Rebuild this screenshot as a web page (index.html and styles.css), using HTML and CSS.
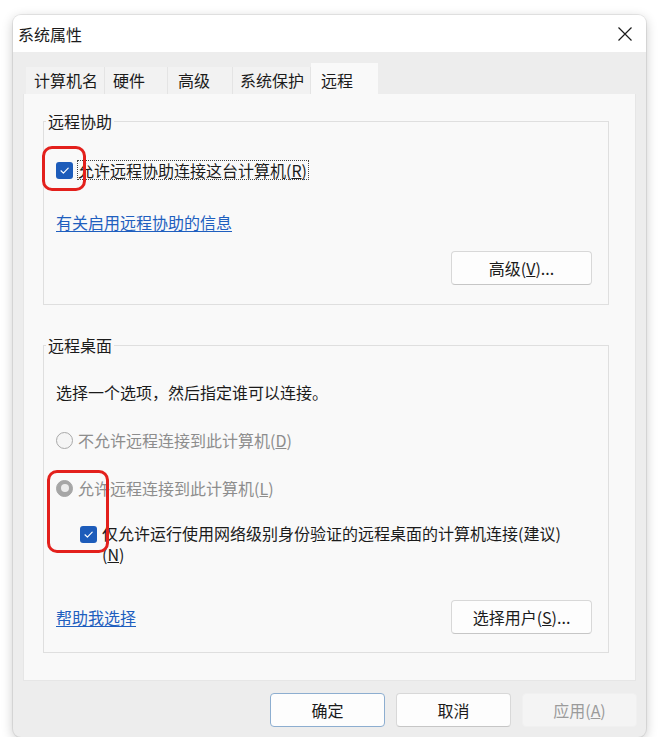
FILE: index.html
```html
<!DOCTYPE html>
<html lang="zh-CN">
<head>
<meta charset="utf-8">
<title>系统属性</title>
<link rel="stylesheet" href="styles.css">
</head>
<body>
<div class="window">
  <div class="titlebar">
    <span class="title">系统属性</span>
    <svg class="close" width="14" height="14" viewBox="0 0 14 14"><path d="M0.5 0.5 L13.5 13.5 M13.5 0.5 L0.5 13.5" stroke="#1b1b1b" stroke-width="1.2" fill="none"/></svg>
  </div>
  <div class="tabs">
    <div class="tab t1">计算机名</div>
    <div class="tab t2">硬件</div>
    <div class="tab t3">高级</div>
    <div class="tab t4">系统保护</div>
    <div class="tab t5 active">远程</div>
  </div>
  <div class="panel">
    <fieldset class="group g1">
      <legend>远程协助</legend>
      <div class="group-body">
        <div class="check-row">
          <span class="checkbox"><svg width="17" height="17" viewBox="0 0 17 17"><path d="M5 8.8 L7.4 11.1 L12.2 6.2" stroke="#fff" stroke-width="1.2" fill="none" stroke-linecap="round" stroke-linejoin="round"/></svg></span>
          <span class="focus">允许远程协助连接这台计算机(<u>R</u>)</span>
        </div>
        <div class="link-row"><a class="link" href="#">有关启用远程协助的信息</a></div>
        <div class="btn-row"><button class="btn">高级(<u>V</u>)...</button></div>
      </div>
    </fieldset>
    <fieldset class="group g2">
      <legend>远程桌面</legend>
      <div class="group-body">
        <div class="desc">选择一个选项，然后指定谁可以连接。</div>
        <div class="radio-row r1"><span class="radio"></span><span class="disabled">不允许远程连接到此计算机(<u>D</u>)</span></div>
        <div class="radio-row r2"><span class="radio on"></span><span class="disabled">允许远程连接到此计算机(<u>L</u>)</span></div>
        <div class="nla-row">
          <span class="checkbox"><svg width="17" height="17" viewBox="0 0 17 17"><path d="M5 8.8 L7.4 11.1 L12.2 6.2" stroke="#fff" stroke-width="1.2" fill="none" stroke-linecap="round" stroke-linejoin="round"/></svg></span>
          <span class="nla-text">仅允许运行使用网络级别身份验证的远程桌面的计算机连接(建议)<br>(<u>N</u>)</span>
        </div>
        <div class="bottom-row">
          <a class="link" href="#">帮助我选择</a>
          <button class="btn">选择用户(<u>S</u>)...</button>
        </div>
      </div>
    </fieldset>
  </div>
  <div class="footer">
    <button class="fbtn ok">确定</button>
    <button class="fbtn">取消</button>
    <button class="fbtn off">应用(<u>A</u>)</button>
  </div>
  <div class="mark mark1"></div>
  <div class="mark mark2"></div>
</div>
</body>
</html>
```
FILE: styles.css
```css
html, body {
  margin: 0;
  background: #ffffff;
}
body {
  font-family: "Noto Sans CJK SC", "Noto Sans", sans-serif;
  font-size: 16px;
  color: #1b1b1b;
}
.window {
  position: relative;
  margin: 15px 0 0 13px;
  width: 633px;
  height: 722px;
  border-radius: 8px;
  overflow: hidden;
  background: #ededed;
  box-shadow: 0 0 0 1px rgba(0,0,0,0.07), 0 3px 12px rgba(0,0,0,0.22);
  display: flex;
  flex-direction: column;
}
.titlebar {
  height: 37px;
  flex-shrink: 0;
  background: #ffffff;
  display: flex;
  align-items: center;
  justify-content: space-between;
  padding: 0 14px 0 5px;
}
.title {
  line-height: 22px;
}
.close {
  display: block;
}
.tabs {
  display: flex;
  align-items: flex-end;
  height: 31px;
  margin: 11px 0 0 13px;
  flex-shrink: 0;
}
.tab {
  height: 27px;
  box-sizing: border-box;
  line-height: 27px;
  padding-left: 8px;
  background: #f2f2f2;
  border-right: 1px solid #e4e4e4;
  white-space: nowrap;
}
.t1 { width: 79px; }
.t2 { width: 63px; }
.t3 { width: 65px; padding-left: 10px; }
.t4 { width: 78px; padding-left: 7px; }
.t5 { width: 67px; padding-left: 10px; }
.tab.active {
  height: 31px;
  padding-top: 4px;
  background: #f9f9f9;
  border-right: none;
}
.panel {
  margin: 0 10px;
  height: 587px;
  flex-shrink: 0;
  box-sizing: border-box;
  background: #f9f9f9;
  border: 1px solid #e6e6e6;
  border-top: none;
  padding: 0 26px 0 19px;
}
.group {
  margin: 0;
  padding: 0;
  min-width: 0;
  border: 1px solid #dfdfdf;
}
.group legend {
  padding: 0 2px;
  margin-left: 2px;
  line-height: 22px;
}
.g1 { margin-top: 16px; }
.g2 { margin-top: 29px; }
.group-body {
  padding: 0 16px 19px 12px;
}
.g2 .group-body { padding-bottom: 18px; }
.check-row {
  margin-top: 27px;
  height: 22px;
  display: flex;
  align-items: center;
}
.checkbox {
  width: 17px;
  height: 17px;
  flex-shrink: 0;
  border-radius: 3px;
  background: #1d5cba;
  display: block;
}
.checkbox svg { display: block; }
.focus {
  margin-left: 4px;
  border: 1px dotted #444;
  line-height: 18px;
  padding: 0 1px 0 0;
}
.link-row {
  margin-top: 30px;
  line-height: 22px;
}
.link {
  color: #1f5fbf;
  text-decoration: underline;
  text-underline-offset: 2px;
  line-height: 22px;
}
.btn-row {
  margin-top: 18px;
  display: flex;
  justify-content: flex-end;
}
.btn {
  font: inherit;
  color: #1b1b1b;
  width: 141px;
  height: 34px;
  padding: 0;
  background: #fdfdfd;
  border: 1px solid #d8d8d8;
  border-bottom-color: #c6c6c6;
  border-radius: 4px;
}
.desc {
  margin-top: 25px;
  line-height: 22px;
}
.radio-row {
  margin-top: 26px;
  height: 22px;
  display: flex;
  align-items: center;
  gap: 5px;
}
.radio {
  width: 17px;
  height: 17px;
  flex-shrink: 0;
  box-sizing: border-box;
  border-radius: 50%;
  border: 1px solid #a9a9a9;
  background: #f5f5f5;
  display: flex;
  align-items: center;
  justify-content: center;
}
.radio.on {
  background: #a6a6a6;
  border-color: #a6a6a6;
}
.radio.on::after {
  content: "";
  width: 8px;
  height: 8px;
  border-radius: 50%;
  background: #ececec;
}
.disabled {
  color: #8d8d8d;
  line-height: 22px;
}
.nla-row {
  margin-top: 24px;
  margin-left: 24px;
  display: flex;
  align-items: flex-start;
  gap: 5px;
}
.nla-row .checkbox { margin-top: 3px; }
.nla-text {
  line-height: 21px;
}
.bottom-row {
  margin-top: 35px;
  display: flex;
  justify-content: space-between;
  align-items: center;
}
.footer {
  flex: 1;
  display: flex;
  justify-content: flex-end;
  align-items: flex-start;
  gap: 11px;
  padding: 12px 9px 0 0;
}
.fbtn {
  font: inherit;
  color: #1b1b1b;
  width: 115px;
  height: 34px;
  padding: 0;
  background: #fdfdfd;
  border: 1px solid #d8d8d8;
  border-bottom-color: #c6c6c6;
  border-radius: 4px;
}
.fbtn.ok {
  border-color: #8daed0;
}
.fbtn.off {
  background: #f4f4f4;
  border-color: #f0f0f0;
  color: #9b9b9b;
}
.mark {
  position: absolute;
  box-sizing: border-box;
  border: 3px solid #e3201c;
  border-radius: 10px;
  pointer-events: none;
}
.mark1 {
  left: 29px;
  top: 131px;
  width: 44px;
  height: 45px;
}
.mark2 {
  left: 34px;
  top: 455px;
  width: 62px;
  height: 83px;
}
```
